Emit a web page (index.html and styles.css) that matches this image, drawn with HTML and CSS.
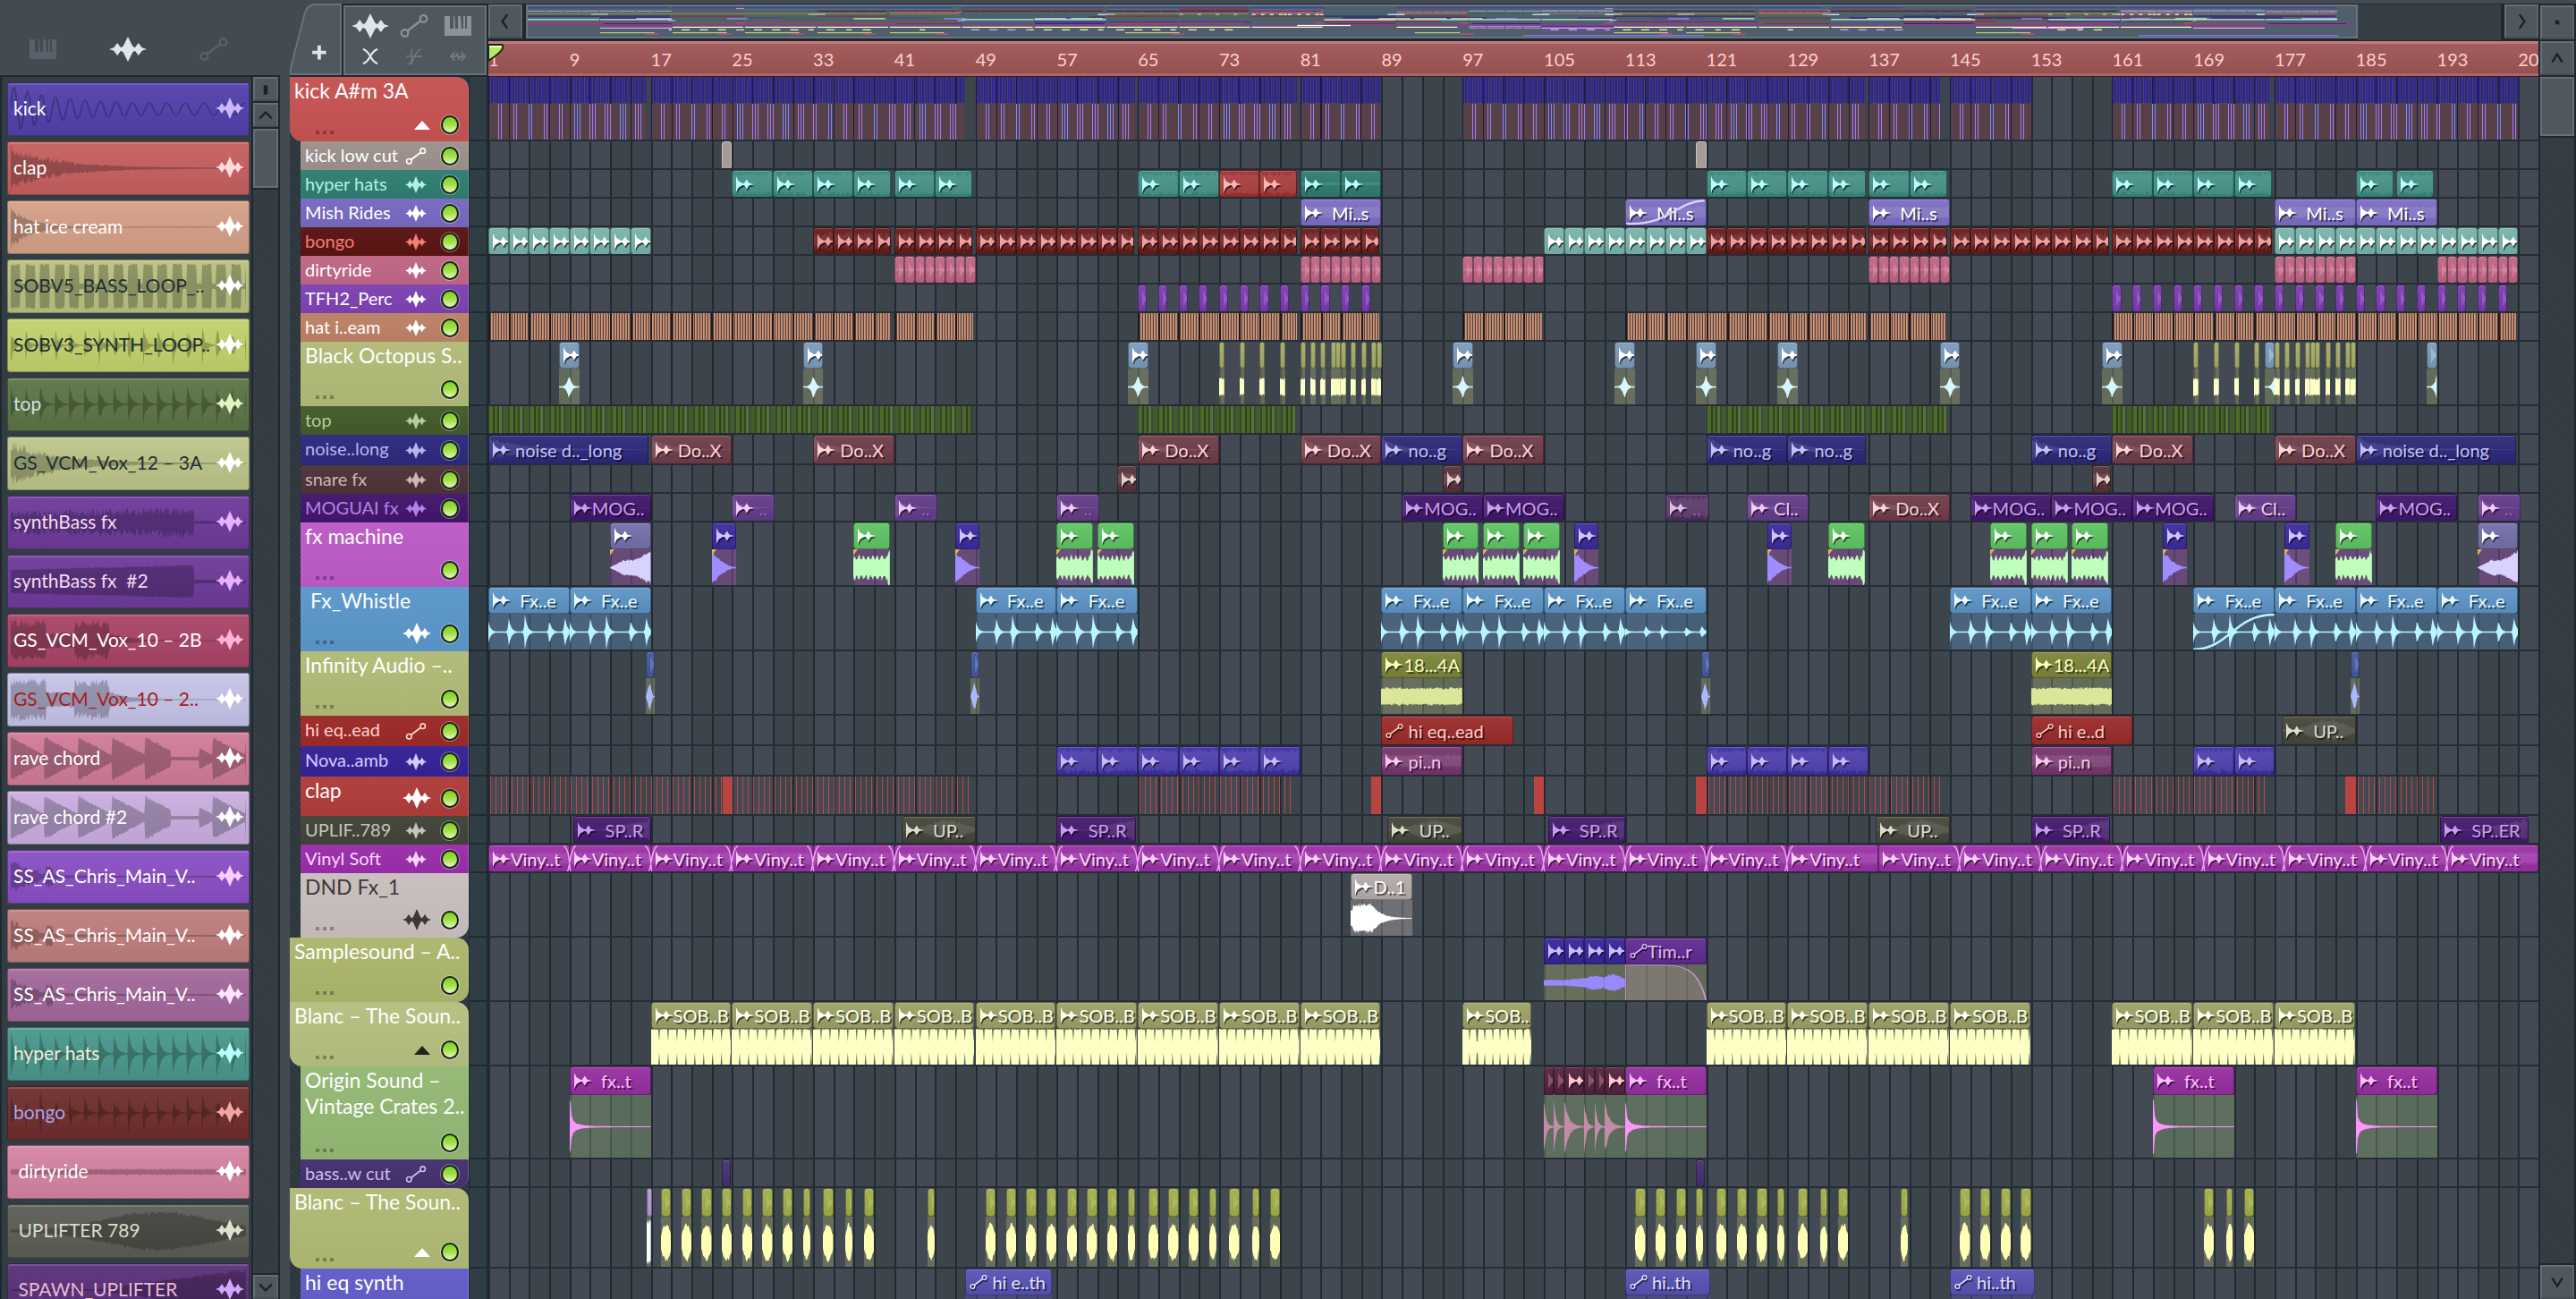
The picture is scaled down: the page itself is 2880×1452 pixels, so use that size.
FILE: index.html
```html
<!DOCTYPE html>
<html lang="en">

<head>
    <meta charset="UTF-8">
    <meta name="viewport" content="width=device-width, initial-scale=1.0">
    <title>Playlist</title>
    <link rel="stylesheet" href="styles.css">
</head>

<body>
    <!-- shared icons -->
    <svg class="defs" aria-hidden="true">
        <symbol id="i-wave" viewBox="0 0 32 24" preserveAspectRatio="none">
            <path d="M0 12 L4 10.5 L7 6 L10 10.5 L12 9 L16 0 L20 9 L22 10.5 L25 6 L28 10.5 L32 12 L28 13.5 L25 18 L22 13.5 L20 15 L16 24 L12 15 L10 13.5 L7 18 L4 13.5 Z" fill="currentColor" />
        </symbol>
        <symbol id="i-clip" viewBox="0 0 22 20">
            <path d="M0 0 L3 6 L8 9 L10 8.5 L13 4 L16 8.5 L22 10 L16 11.5 L13 16 L10 11.5 L8 11 L3 14 L0 20 Z" fill="currentColor" />
        </symbol>
        <symbol id="i-auto" viewBox="0 0 32 26">
            <path d="M8.500 18.500 L23 7.500" stroke="currentColor" stroke-width="2.500" fill="none" />
            <circle cx="5.500" cy="21" r="3.800" stroke="currentColor" stroke-width="2.200" fill="none" />
            <circle cx="26.500" cy="5" r="3.800" stroke="currentColor" stroke-width="2.200" fill="none" />
        </symbol>
        <symbol id="i-keys" viewBox="0 0 30 22">
            <path d="M0 0 H6 V14 H10 V0 H11 L12 14 H15 V0 H18 L19 14 H21 V0 H23 V14 H25 V0 H30 V22 H0 Z" fill="currentColor" />
        </symbol>
    </svg>

    <div class="app">
        <aside class="picker">
            <div class="picker-tabs">
                <button aria-label="Patterns"><svg class="ic-keys"><use href="#i-keys" /></svg></button>
                <button class="on" aria-label="Audio clips"><svg class="ic-wave"><use href="#i-wave" /></svg></button>
                <button aria-label="Automation"><svg class="ic-auto"><use href="#i-auto" /></svg></button>
            </div>
            <div class="picker-body">
                <ul class="picker-list" id="picker"></ul>
                <div class="scroll">
                    <button class="sb" aria-label="Picker options"><svg viewBox="0 0 14 14"><path d="M7 3 V12" stroke-width="4" /></svg></button>
                    <button class="sb" aria-label="Scroll up"><svg viewBox="0 0 14 14"><path d="M1 10 L7 4 L13 10" /></svg></button>
                    <div class="thumb"></div>
                    <div class="rail"></div>
                    <button class="sb" aria-label="Scroll down"><svg viewBox="0 0 14 14"><path d="M1 4 L7 10 L13 4" /></svg></button>
                </div>
            </div>
        </aside>

        <main class="playlist">
            <div class="top">
                <div class="tools">
                    <button class="add" aria-label="Add track">
                        <svg viewBox="0 0 60 82" preserveAspectRatio="none"><path d="M1 81 V74 L17 12 Q20 1 29 1 H59 V81 Z" fill="#50585f" stroke="#68727a" stroke-width="2" /><path d="M26 56 H42 M34 48 V64" stroke="#dfe5e8" stroke-width="4" /></svg>
                    </button>
                    <div class="toolbox">
                        <button class="on" aria-label="Audio"><svg class="ic-wave"><use href="#i-wave" /></svg></button>
                        <button aria-label="Automation"><svg class="ic-auto"><use href="#i-auto" /></svg></button>
                        <button aria-label="Patterns"><svg class="ic-keys"><use href="#i-keys" /></svg></button>
                        <button class="on" aria-label="Crossfade"><svg class="ic-small" viewBox="0 0 20 20"><path d="M1 1 C11 4 9 16 19 19 M19 1 C9 4 11 16 1 19" fill="none" stroke="currentColor" stroke-width="2.500" /></svg></button>
                        <button class="off" aria-label="Curve"><svg class="ic-small" viewBox="0 0 20 20"><path d="M0 10 H20 M7 0 V20 M2 20 C12 18 8 4 19 1" fill="none" stroke="currentColor" stroke-width="1.500" /></svg></button>
                        <button class="off" aria-label="Stretch"><svg class="ic-small" viewBox="0 0 20 20"><path d="M6 5 L1 10 L6 15 M14 5 L19 10 L14 15 M2 10 H7 L9 7 L11 13 L13 10 H18" fill="none" stroke="currentColor" stroke-width="2" /></svg></button>
                    </div>
                </div>
                <div class="nav">
                    <div class="mini">
                        <button class="sb" aria-label="Scroll left"><svg viewBox="0 0 14 14"><path d="M9 0 L4 7 L9 14" /></svg></button>
                        <div class="mini-map" id="minimap"></div>
                        <div class="mini-rest"></div>
                        <button class="sb" aria-label="Scroll right"><svg viewBox="0 0 14 14"><path d="M5 0 L10 7 L5 14" /></svg></button>
                    </div>
                    <div class="ruler" id="ruler">
                        <svg class="playhead" viewBox="0 0 18 20"><path d="M0 1 H15 Q17 1 16 5 Q14 10 0 19 Z" fill="#b4e86a" stroke="#1c2710" stroke-width="2" /><path d="M1 3 H14" stroke="#f0ffc8" stroke-width="2" /></svg>
                    </div>
                </div>
                <div class="corner">
                    <button class="sb" aria-label="Zoom"><svg viewBox="0 0 14 14"><path d="M7 5 V9" stroke-width="4" /></svg></button>
                    <button class="sb" aria-label="Scroll up"><svg viewBox="0 0 14 14"><path d="M2 11 L7 3 L12 11" /></svg></button>
                </div>
            </div>
            <div class="body">
                <div class="rows" id="rows"></div>
                <div class="scroll wide">
                    <div class="thumb"></div>
                    <div class="rail"></div>
                    <button class="sb" aria-label="Scroll down"><svg viewBox="0 0 14 14"><path d="M2 3 L7 11 L12 3" /></svg></button>
                </div>
            </div>
        </main>
    </div>
    <script src="playlist.js"></script>
</body>

</html>
```

FILE: styles.css
```css
* {
    box-sizing: border-box;
}

body {
    margin: 0;
    background: #434b52;
    font-family: "Liberation Sans Narrow", "Lato", "Noto Sans", sans-serif;
    font-size: 21px;
    line-height: 28px;
    color: #fff;
    overflow: hidden;
}

button {
    margin: 0;
    padding: 0;
    border: 0;
    background: none;
    color: inherit;
    font: inherit;
}

svg {
    display: block;
}

.defs {
    width: 0;
    height: 0;
    position: absolute;
}

.app {
    display: flex;
    height: 100vh;
}

.ic-wave {
    width: 42px;
    height: 28px;
}

.ic-auto {
    width: 34px;
    height: 26px;
}

.ic-keys {
    width: 30px;
    height: 22px;
}

.ic-small {
    width: 20px;
    height: 18px;
}

/* picker */

.picker {
    width: 313px;
    flex: none;
    display: flex;
    flex-direction: column;
}

.picker-tabs {
    height: 84px;
    flex: none;
    display: flex;
    justify-content: space-between;
    align-items: center;
    padding: 26px 57px 0 33px;
    color: #59626a;
}

.picker-tabs .on,
.toolbox .on {
    color: #dfe5e8;
}

.picker-body {
    flex: 1;
    min-height: 0;
    display: flex;
    border: 2px solid #1f282e;
    border-bottom: 0;
}

.picker-list {
    flex: 1;
    min-width: 0;
    margin: 0;
    padding: 6px 2px 0 6px;
    list-style: none;
    background: #323c43;
    overflow: hidden;
    display: flex;
    flex-direction: column;
    gap: 6px;
}

.item {
    flex: none;
    height: 60px;
    display: grid;
    grid-template-columns: 1fr 32px;
    align-items: center;
    padding: 0 5px 2px 6px;
    border-radius: 3px;
    border: 1px solid rgba(0, 0, 0, .3);
    box-shadow: inset 0 2px 0 rgba(255, 255, 255, .14);
    background-image: linear-gradient(rgba(255, 255, 255, .05), rgba(0, 0, 0, .06));
    position: relative;
    white-space: pre;
    overflow: hidden;
}

.item > .back {
    position: absolute;
    left: 3px;
    top: 2px;
    width: calc(100% - 6px);
    height: 54px;
    color: rgba(0, 0, 0, .24);
}

.item span,
.item .ic {
    position: relative;
}

.item .ic {
    width: 32px;
    height: 24px;
}

/* scrollbars */

.sb {
    background: #50585f;
    border: 2px solid #656f77;
    border-color: #656f77 #5b646c #454e55 #656f77;
    flex: none;
    display: flex;
    align-items: center;
    justify-content: center;
}

.sb svg {
    width: 16px;
    height: 16px;
    fill: none;
    stroke: #1b2126;
    stroke-width: 2;
}

.scroll {
    width: 30px;
    flex: none;
    display: flex;
    flex-direction: column;
    gap: 2px;
    border-left: 2px solid #1f282e;
    background: #1f282e;
}

.scroll .sb {
    height: 27px;
}

.thumb {
    height: 66px;
    flex: none;
    background: #50585f;
    border: 2px solid #656f77;
}

.rail {
    flex: 1;
    background: repeating-linear-gradient(45deg, #323b42 0 2px, #373f45 2px 4px);
}

.scroll.wide {
    width: 42px;
    border-right: 2px solid #1f282e;
}

.scroll.wide .sb {
    height: 38px;
}

/* playlist */

.playlist {
    flex: 1;
    min-width: 0;
    display: flex;
    flex-direction: column;
    margin-left: 11px;
}

.top {
    height: 86px;
    flex: none;
    display: flex;
    background: linear-gradient(#434b52 4px, #1f282e 4px);
}

.tools {
    width: 222px;
    flex: none;
    display: flex;
    gap: 2px;
    padding: 4px 2px 2px 0;
}

.add {
    width: 58px;
    background: #434b52;
}

.add svg {
    width: 58px;
    height: 80px;
}

.toolbox {
    flex: 1;
    margin-top: 2px;
    padding: 3px 6px 4px 4px;
    display: grid;
    grid-template-columns: 1fr 1fr 1fr;
    grid-template-rows: 36px 1fr;
    place-items: center;
    background: #50585f;
    border: 2px solid #68727a;
    color: #8b949a;
}

.toolbox .off {
    color: #727b82;
}

.nav {
    flex: 1;
    min-width: 0;
}

.mini {
    height: 40px;
    margin-top: 5px;
    display: flex;
    gap: 4px;
}

.mini .sb {
    width: 38px;
    height: 38px;
}

.mini-map {
    flex: 2047;
    height: 38px;
    background: #50606a;
    border: 2px solid #68757c;
}

.mini-map svg {
    width: 100%;
    height: 34px;
}

.mini-rest {
    flex: 160;
    background: #363f46;
    margin-left: -4px;
}

.ruler {
    height: 39px;
    margin-top: 1px;
    position: relative;
    background: linear-gradient(#a45d5f, #95504f);
    border-top: 3px solid #c27b7d;
    border-bottom: 3px solid #ad6466;
    color: #ffcfcf;
    font-size: 20px;
    overflow: hidden;
}

.ruler span {
    position: absolute;
    top: 3px;
}

.playhead {
    position: absolute;
    left: 0;
    top: 0;
    width: 18px;
    height: 20px;
    z-index: 2;
}

.corner {
    width: 42px;
    padding: 6px 2px 0;
    display: flex;
    flex-direction: column;
    gap: 2px;
}

.corner .sb {
    height: 38px;
}

.body {
    flex: 1;
    min-height: 0;
    display: flex;
}

.rows {
    flex: 1;
    min-width: 0;
    overflow: hidden;
}

.row {
    display: flex;
}

.head {
    width: 200px;
    flex: none;
    padding-left: 12px;
    background: repeating-linear-gradient(45deg, #2b353c 0 2px, #343d44 2px 4px);
}

.head.parent {
    padding-left: 0;
}

.track {
    height: 100%;
    position: relative;
    display: flex;
    justify-content: space-between;
    padding: 1px 10px 0 5px;
    overflow: hidden;
    white-space: pre;
    background-image: linear-gradient(rgba(255, 255, 255, .03), rgba(0, 0, 0, .03));
    border-right: 1px solid rgba(255, 255, 255, .2);
}

.track .name {
    flex: 1;
    min-width: 0;
    font-size: 20px;
}

.track.tall .name {
    font-size: 23px;
    line-height: 29px;
    margin-right: -10px;
}

.track.tr {
    border-top-right-radius: 14px;
}

.track.br {
    border-bottom-right-radius: 14px;
}

.track.bl {
    border-bottom-left-radius: 14px;
}

.side {
    display: flex;
    align-items: center;
    gap: 16px;
    align-self: center;
}

.tall .side {
    position: absolute;
    right: 10px;
    bottom: 8px;
}

.side .ic {
    width: 24px;
    height: 19px;
}

.tall .side .ic {
    width: 32px;
    height: 24px;
    margin-right: -5px;
}

.side .tri {
    width: 18px;
    height: 10px;
    margin-right: -4px;
}

.led {
    width: 20px;
    height: 21px;
    border-radius: 50%;
    border: 2px solid #13241a;
    background: linear-gradient(#7fcf22, #a5df4a 50%, #e6f9c0);
    box-shadow: 0 0 0 1px rgba(255, 255, 255, .35);
}

.dots {
    position: absolute;
    right: 150px;
    bottom: 8px;
    width: 20px;
    height: 4px;
    background: repeating-linear-gradient(90deg, rgba(0, 0, 0, .3) 0 4px, transparent 4px 8px);
}

.strip {
    width: 22px;
    flex: none;
    background: #313d44;
    border: solid #1e2a31;
    border-width: 0 2px 2px 1px;
}

.lane {
    flex: 1;
    min-width: 0;
    position: relative;
    overflow: hidden;
    border-bottom: 2px solid #252d36;
    background:
        repeating-linear-gradient(90deg, #212932 0 2px, transparent 2px calc(100% / 101)),
        repeating-linear-gradient(90deg, #434a54 0 calc(100% * 4 / 202), #3c444c calc(100% * 4 / 202) calc(100% * 8 / 202));
}

/* clips sit on the timeline at their own bar */

.clip {
    position: absolute;
    top: 0;
    bottom: -1px;
    display: flex;
    flex-direction: column;
}

.title {
    flex: 1;
    min-height: 0;
    position: relative;
    display: flex;
    align-items: center;
    padding-left: 4px;
    overflow: hidden;
    white-space: pre;
    font-size: 20px;
    border-radius: 4px;
    border: 1px solid rgba(0, 0, 0, .35);
    box-shadow: inset 0 1px 0 rgba(255, 255, 255, .2);
    background-image: linear-gradient(rgba(255, 255, 255, .06), rgba(0, 0, 0, .06));
}

.bodied .title {
    flex: 0 0 30px;
}

.high .title {
    flex: 0 0 32px;
}

.title .ic {
    width: 20px;
    height: 20px;
    flex: none;
    position: relative;
    filter: drop-shadow(1px 2px 0 rgba(0, 0, 0, .6));
}

.title .ghost {
    opacity: .3;
    filter: none;
}

.title .lbl {
    position: relative;
    text-shadow: 2px 2px 0 rgba(0, 0, 0, .55);
}

.title .dim {
    opacity: .3;
}

.title .back {
    position: absolute;
    inset: 0;
    width: 100%;
    height: 100%;
    opacity: .1;
}

.wavebox {
    flex: 1;
    min-height: 0;
    position: relative;
    background: color-mix(in srgb, var(--row) 34%, transparent);
}

.wavebox svg,
.fade {
    position: absolute;
    inset: 0;
    width: 100%;
    height: 100%;
}

.xfade {
    position: absolute;
    left: -7px;
    top: 1px;
    width: 14px;
    height: 30px;
    z-index: 1;
}

/* dense runs of short hits, with the bar lines showing through */

.kicks {
    background:
        repeating-linear-gradient(90deg, #1c1a3c 0 1px, transparent 1px calc(100% * 2 / var(--len))),
        repeating-linear-gradient(90deg, #35259d 0 2px, rgba(53, 37, 157, .25) 2px 3px, #2f2387 3px 5px, transparent 5px 6px) 0 0 / 100% 29px no-repeat,
        repeating-linear-gradient(90deg, #70383e 0 1px, #4a454d 1px 3px) 0 30px / 100% 100% no-repeat;
}

.kicks svg {
    width: 100%;
    height: 41px;
    margin-top: 30px;
}

.hats {
    background:
        repeating-linear-gradient(90deg, #1d1a1e 0 2px, transparent 2px calc(100% * 2 / var(--len))),
        repeating-linear-gradient(90deg, #d2977a 0 1px, #bd8165 1px 2px, #4c413f 2px 3px);
}

.tops {
    background: repeating-linear-gradient(90deg, #33461f 0 1px, #4c6a2c 1px 5px, #2e401d 5px 7px, #48652b 7px 10px, #32451f 10px 12px, #557434 12px 15px, #3b444a 15px 17px, #405d26 17px 22px, #3b444a 22px 23px);
}

.claps {
    background: repeating-linear-gradient(90deg, transparent 0 2px, #c04644 2px 3px, transparent 3px 6px);
}

.solid {
    background: #ba4442;
}

.flat {
    background: #a79a97;
    border-radius: 3px;
    border: 1px solid #ccbfba;
    color: #7d716e;
}
```

FILE: playlist.js
```js
const BARS = 202;

// small repeatable random, so waveforms stay the same on every load
let seed = 7;
function rnd() {
    seed = (seed * 16807) % 2147483647;
    return seed / 2147483647;
}

const ENV = {
    decay: t => Math.exp(-5 * t),
    fast: t => Math.exp(-12 * t),
    pluck: t => t < .02 ? .9 : .22 * Math.exp(-10 * t) + .65 * Math.exp(-50 * t),
    flat: () => .9,
    mid: () => .5,
    tall: t => .3 + .5 * Math.sin(Math.PI * t),
    low: () => .12,
    belly: t => .05 + .8 * Math.pow(Math.sin(Math.PI * Math.min(1, t * .8)), 3),
    grow: t => Math.max(.02, (t - .35) * 1.4),
    hits: t => Math.exp(-5 * ((t * 16) % 1)),
    saw: t => .95 - .65 * ((t * 11) % 1),
    loop: t => (t * 16) % 1 < .65 ? .95 : .1,
    sob: t => (t * 9) % 1 < .86 ? 1 : .3,
    crash: t => t < .04 ? .5 : t < .35 ? .85 : .85 * Math.exp(-7 * (t - .35)),
    synth: t => t < .78 ? .5 + .25 * t : .06,
    vox: t => (t < .15 ? .9 : t < .27 ? .35 : t < .42 ? .85 : .5 * Math.exp(-14 * (t - .4))),
    blip: t => (t < .12 ? .7 : .3) * Math.exp(-8 * t) + (t > .15 && t < .18 ? .4 : 0) + .02,
    chord: t => { let f = (t * 7) % 1; return t > .68 && t < .8 ? .06 : .95 - .8 * f; },
    spark: t => Math.pow(1 - Math.abs(t - .5) * 2, 4) * .7 + .02,
    star: t => Math.pow(t, 4) * .7 + .02,
    rev: t => t < .35 ? t * 1.3 : t < .6 ? .45 : .45 + (t - .6) * 1.3,
    arrow: t => Math.max(.02, .98 * Math.pow(1 - t, 1.8)),
    green: t => t > .93 ? 1 : .6 + .15 * Math.sin(t * 50),
    spindle: t => t < .5 ? t * 1.9 : Math.max(.02, (.8 - t) * 2.5),
    s0: () => .16,
    s1: t => .16 + .1 * t,
    s2: t => .26 + .14 * Math.sin(t * 3),
    s3: t => .35 + .15 * Math.sin(t * 4),
    whistle: t => {
        let e = .02;
        [[0, .6], [.25, .85], [.45, 1], [.75, .7], [.94, .95]].forEach(h => {
            let d = t - h[0];
            if (d >= 0) e = Math.max(e, h[1] * Math.exp(-35 * d));
            else e = Math.max(e, h[1] * Math.exp(120 * d));
        });
        return e;
    },
    quiet: t => ENV.whistle(t) * .45 + .01
};

function wave(kind, color, n, jag) {
    let top = [], bottom = [];
    for (let i = 0; i <= n; i++) {
        let e = ENV[kind](i / n);
        let a = e * 49 * (1 - jag * rnd()), b = e * 49 * (1 - jag * rnd());
        top.push(i + " " + (50 - a - .8).toFixed(1));
        bottom.unshift(i + " " + (50 + b + .8).toFixed(1));
    }
    return `<svg class="back" viewBox="0 0 ${n} 100" preserveAspectRatio="none"><path fill="${color}" d="M${top.join("L")}L${bottom.join("L")}Z"/></svg>`;
}

function icon(name, color, cls) {
    return `<svg class="ic ${cls || ""}" style="color:${color}"><use href="#i-${name}"/></svg>`;
}

/* ---- picker ---- */
// name, colour, text, icon, envelope, jag
const ITEMS = [
    ["kick", "#5241ab", "#fff", "#cdb8ff", "line", 0],
    ["clap", "#c65f5f", "#fff", "#ffdcdc", "decay", .5],
    ["hat ice cream", "#d5a088", "#fff", "#fff", "fast", .4],
    ["SOBV5_BASS_LOOP_..", "#b9c180", "#1f2f33", "#fff", "loop", .1],
    ["SOBV3_SYNTH_LOOP..", "#c3d16c", "#1f2f33", "#fff", "hits", .7],
    ["top", "#5b7446", "#cfe3e0", "#e0f3c2", "hits", .5],
    ["GS_VCM_Vox_12 – 3A", "#bcc588", "#1f2f33", "#fff", "decay", .5],
    ["synthBass fx", "#6d3a9a", "#f3dcf3", "#e8b0ff", "synth", .6],
    ["synthBass fx  #2", "#6d3a9a", "#f3dcf3", "#e8b0ff", "synth", .1],
    ["GS_VCM_Vox_10 – 2B", "#a94468", "#fff", "#ffb4dc", "vox", .4],
    ["GS_VCM_Vox_10 – 2..", "#c5c4e8", "#a81c20", "#fff", "vox", .4],
    ["rave chord", "#d07b9a", "#fff", "#fff", "chord", .15],
    ["rave chord #2", "#c9aedf", "#fff", "#fff", "chord", .15],
    ["SS_AS_Chris_Main_V..", "#8a4fc4", "#fff", "#ffccff", "blip", .4],
    ["SS_AS_Chris_Main_V..", "#be7d7d", "#fff", "#fff", "blip", .4],
    ["SS_AS_Chris_Main_V..", "#a3689b", "#fff", "#ffe6ff", "blip", .4],
    ["hyper hats", "#4a978c", "#f3eedb", "#b8ffff", "hits", .1],
    ["bongo", "#702d2e", "#aaa6ea", "#f2a3a3", "hits", .8],
    [" dirtyride", "#d583a2", "#fff", "#fff", "low", .4],
    [" UPLIFTER 789", "#5b5e55", "#dcdccb", "#e0e0d0", "belly", .2],
    [" SPAWN_UPLIFTER", "#5a3078", "#e8b8d8", "#d0a8ff", "grow", .2]
];

let picker = document.getElementById("picker");
ITEMS.forEach(it => {
    let back;
    if (it[4] == "line") {
        let d = "M0 50";
        for (let x = 0; x < 264; x++) {
            d += `L${x} ${(50 - Math.sin(x * x * -.0003 + x * .42) * (12 + 36 * Math.exp(-x / 50))).toFixed(1)}`;
        }
        back = `<svg class="back" viewBox="0 0 264 100" preserveAspectRatio="none"><path d="${d}" fill="none" stroke="currentColor" stroke-width="2"/></svg>`;
    } else {
        back = wave(it[4], "currentColor", 264, it[5]);
    }
    picker.innerHTML += `<li class="item" style="background-color:${it[1]};color:${it[2]}">${back}<span>${it[0]}</span>${icon("wave", it[3])}</li>`;
});

/* ---- clip kinds ---- */
const K = {
    flat: { cls: "flat", c: "#a79a97" },
    kick: { cls: "kicks", c: "#4a3ab8" },
    hat: { cls: "hats", c: "#a07a70" },
    top: { cls: "tops", c: "#55703a" },
    clap: { cls: "claps", c: "#a04a50" },
    solid: { cls: "solid", c: "#d05050" },
    hyper: { c: "#34877b", f: "#b8ffff", w: "flat" },
    hyper2: { c: "#2f7a6e", f: "#b8ffff", w: "low" },
    red: { c: "#a02c2c", f: "#ffb4b4", w: "flat" },
    mish: { c: "#7b6cc4", f: "#fff", l: "  Mi..s", w: "mid" },
    bongoL: { c: "#78b2aa", f: "#fff" },
    bongo: { c: "#661a1a", f: "#f0a09c", w: "saw" },
    dirty: { c: "#bf6485", f: "#f0b4c8", ghost: 1, w: "low" },
    tfh: { c: "#7a3cb0", f: "#c89af0", ghost: 1 },
    oct: { c: "#7b9bbb", f: "#fff", w: "spark", wc: "#d6f7ff" },
    octS: { c: "#7b9bbb", f: "#fff", w: "star", wc: "#d6f7ff", ghost: 1 },
    oliv: { c: "#a4ab68", f: "#fff", w: "mid", wc: "#fdffc4", thin: 1 },
    noise: { c: "#2b2878", f: "#c4c0ff", l: " noise d.._long", w: "decay" },
    no: { c: "#2b2878", f: "#c4c0ff", l: " no..g", w: "decay" },
    dox: { c: "#6e3b48", f: "#ffd2d6", l: " Do..X", w: "decay" },
    snare: { c: "#553339", f: "#e8cccc", w: "mid" },
    mog: { c: "#40156a", f: "#cf9cf5", l: "MOG..", w: "fast" },
    cl: { c: "#633c88", f: "#f6c8ff", l: " Cl..", w: "decay" },
    dd: { c: "#633c88", f: "#f6c8ff", l: " ..", dim: 1, w: "decay" },
    dd2: { c: "#4b2b5e", f: "#e4b8e4", l: " ..", dim: 1, w: "flat" },
    lav: { c: "#7470aa", f: "#fff", w: "rev", wc: "#d8d2ff", mark: 1 },
    ind: { c: "#3c2a9c", f: "#d0c4ff", w: "arrow", wc: "#a08cff", mark: 1 },
    grn: { c: "#5fc363", f: "#f0fff0", w: "green", wc: "#bfffbc", mark: 1 },
    whis: { c: "#5b94c6", f: "#e8fbff", l: "  Fx..e", w: "whistle", wc: "#b8f6ff" },
    whisQ: { c: "#5b94c6", f: "#e8fbff", l: "  Fx..e", w: "quiet", wc: "#b8f6ff" },
    thinB: { c: "#44589a", f: "#9ab0f0", ghost: 1, w: "spindle", wc: "#a8b8ff" },
    inf: { c: "#7b8539", f: "#faffc0", l: "18...4A", w: "mid", wc: "#dce698" },
    hiL: { c: "#9a2b2b", f: "#ffc9c4", l: " hi eq..ead", i: "auto" },
    hiS: { c: "#9a2b2b", f: "#ffc9c4", l: " hi e..d", i: "auto" },
    up: { c: "#45463a", f: "#dcdccb", l: "  UP..", w: "belly" },
    nova: { c: "#3d2da4", f: "#c8b8ff", w: "flat" },
    pin: { c: "#75356c", f: "#ffc4f0", l: " pi..n", w: "mid" },
    sp: { c: "#43196c", f: "#c89cf5", l: "  SP..R", w: "grow" },
    sper: { c: "#43196c", f: "#c89cf5", l: "  SP..ER", w: "grow" },
    viny: { c: "#9c30a8", f: "#ffd0ff", l: "Viny..t", w: "mid", x: 1 },
    dnd: { c: "#b4aaa9", f: "#fff", l: "D..1", w: "crash", wc: "#fff" },
    samp0: { c: "#35259a", f: "#c8bcff", w: "s0", wc: "#9a88ff" },
    samp1: { c: "#35259a", f: "#c8bcff", w: "s1", wc: "#9a88ff" },
    samp2: { c: "#35259a", f: "#c8bcff", w: "s2", wc: "#9a88ff" },
    samp3: { c: "#35259a", f: "#c8bcff", w: "s3", wc: "#9a88ff" },
    tim: { c: "#5f2a92", f: "#e0b8f0", l: "Tim..r", i: "auto", curve: "M0 100V2H50C80 2 92 30 100 100" },
    sob: { c: "#9ba165", f: "#feffec", l: "SOB..B", w: "sob", wc: "#feffc4" },
    sob2: { c: "#9ba165", f: "#feffec", l: "SOB..", w: "sob", wc: "#feffc4" },
    fxt: { c: "#962f9f", f: "#ffbcff", l: "  fx..t", w: "pluck", wc: "#ff94ff" },
    mar: { c: "#52233d", f: "#ffc4d0", ghost1: 1, w: "decay", wc: "#c48ba8" },
    bass: { c: "#43306e", f: "#7a5cae", thin: 1 },
    lil: { c: "#b49ad0", f: "#fff", thin: 1, w: "flat", wc: "#fff" },
    blan: { c: "#a0ad4c", f: "#d0dc80", ghost: 1, w: "tall", wc: "#feffb4" },
    hiT: { c: "#5652b4", f: "#e4e0ff", l: " hi e..th", i: "auto" },
    hiU: { c: "#5652b4", f: "#e4e0ff", l: " hi..th", i: "auto" }
};

// n clips of the same kind laid end to end
function run(kind, from, to, step, len) {
    let out = [];
    for (let b = from; b < to - .01; b += step) out.push([kind, b, len || Math.min(step, to - b)]);
    return out;
}
function at(kind, len, list) {
    return list.map(b => [kind, b, len]);
}

/* ---- tracks ---- */
// name, height, colour, text, icon, classes, clips
const TRACKS = [
    ["kick A#m 3A", 72, "#c65352", "#fff", "tri", "parent tr bl", [["kick", 0, 15.6], ["kick", 16, 31], ["kick", 48, 15.7], ["kick", 64, 15.7], ["kick", 80, 8], ["kick", 96, 39.7], ["kick", 136, 7], ["kick", 144, 8], ["kick", 160, 15.6], ["kick", 176, 24]]],
    ["kick low cut", 32, "#9d918c", "#fff", "auto", "", at("flat", 1, [23, 119])],
    ["hyper hats", 32, "#2f7d71", "#b4efe4", "wave", "", [...run("hyper", 24, 39.7, 4), ...run("hyper", 40, 47.7, 4), ...run("hyper", 64, 72, 4), ...run("red", 72, 79.7, 4), ...run("hyper2", 80, 88, 4), ...run("hyper", 120, 135.7, 4), ...run("hyper", 136, 143.7, 4), ...run("hyper", 160, 175.7, 4), ...at("hyper", 3.7, [184, 188])]],
    ["Mish Rides", 32, "#7768bf", "#fff", "wave", "", [["mish", 80, 8], ["mish", 112, 8, "fade"], ["mish", 136, 8], ["mish", 176, 8], ["mish", 184, 8]]],
    ["bongo", 32, "#5a1413", "#f07f77", "wave", "", [...run("bongoL", 0, 16, 2), ...run("bongo", 32, 39.7, 2), ...run("bongo", 40, 47.7, 2), ...run("bongo", 48, 63.6, 2), ...run("bongo", 64, 79.7, 2), ...run("bongo", 80, 87.8, 2), ...run("bongoL", 104, 120, 2), ...run("bongo", 120, 135.7, 2), ...run("bongo", 136, 143.7, 2), ...run("bongo", 144, 159.7, 2), ...run("bongo", 160, 175.7, 2), ...run("bongoL", 176, 200, 2)]],
    ["dirtyride", 32, "#bf6585", "#fff", "wave", "", [40, 80, 96, 136, 176, 192].flatMap(b => run("dirty", b, b + 8, 1))],
    ["TFH2_Perc", 32, "#7d42b2", "#fff", "wave", "", [...run("tfh", 64, 88, 2, .9), ...run("tfh", 160, 200, 2, .9)]],
    ["hat i..eam", 32, "#bd8165", "#fff", "wave", "", [["hat", 0, 39.7], ["hat", 40, 7.8], ["hat", 64, 15.7], ["hat", 80, 7.8], ["hat", 96, 7.8], ["hat", 112, 23.7], ["hat", 136, 7.7], ["hat", 160, 23.9], ["hat", 184, 15.8]]],
    ["Black Octopus S..", 72, "#b1ba76", "#fff", "", "", [...at("oct", 2, [7, 31, 63, 95, 111, 119, 127, 143, 159]), ["octS", 175, 1], ["octS", 191, 1], ...at("oliv", .5, [72, 74, 76, 78, 80, 81, 82, 83, 83.5, 84, 85, 86, 87, 87.5, 168, 170, 172, 174, 176, 177, 178, 179, 179.5, 180, 181, 182, 183, 183.5])]],
    ["top", 32, "#425a28", "#b4cd9c", "wave", "", [["top", 0, 47.7], ["top", 64, 15.7], ["top", 120, 23.7], ["top", 160, 15.7]]],
    ["noise..long", 34, "#2c297e", "#b8b4f0", "wave", "", [["noise", 0, 15.8], ...at("dox", 8, [16, 32, 64, 80, 96, 160, 176]), ["no", 88, 8], ["no", 120, 8], ["no", 128, 7.7], ["no", 152, 8], ["noise", 184, 15.8]]],
    ["snare fx", 32, "#4b3338", "#ceb6b8", "wave", "", at("snare", 1.9, [62, 94, 158])],
    ["MOGUAI fx", 32, "#41176a", "#b680e6", "wave", "", [...at("mog", 8, [8, 90, 98, 146, 154, 162, 186]), ...at("dd", 4.2, [24, 40, 56, 196]), ["dd2", 116, 4.3], ["cl", 124, 6.1], ["cl", 172, 6.1], ["dox", 136, 8]]],
    ["fx machine", 72, "#bc5ac8", "#fff", "", "", [...at("lav", 4, [12, 196]), ...at("ind", 2.4, [22, 46, 107, 126, 165, 177]), ...at("grn", 3.6, [36, 56, 60, 94, 98, 102, 132, 148, 152, 156, 182])]],
    [" Fx_Whistle", 72, "#5b96c9", "#fff", "wave", "", [...at("whis", 8, [0, 8, 48, 56, 88, 96, 104, 144, 152]), ["whisQ", 112, 8], ["whis", 168, 8, "bfade"], ...at("whis", 8, [176, 184, 192])]],
    ["Infinity Audio –..", 72, "#b1ba76", "#fff", "", "", [...at("thinB", .9, [15.5, 47.5, 119.5, 183.5]), ...at("inf", 8, [88, 152])]],
    ["hi eq..ead", 34, "#9b2927", "#ffd0cc", "auto", "", [["hiL", 88, 13], ["hiS", 152, 10], ["up", 176.7, 7.3]]],
    ["Nova..amb", 34, "#362296", "#d0ccff", "wave", "", [...run("nova", 56, 80, 4), ...run("nova", 120, 136, 4), ...run("nova", 168, 176, 4), ["pin", 88, 8], ["pin", 152, 8]]],
    ["clap", 44, "#ae3c3a", "#fff", "wave", "", [["clap", 0, 47.3], ["clap", 64, 15.4], ["clap", 120, 23.5], ["clap", 160, 15.4], ["clap", 184, 7.8], ...at("solid", 1, [23.1, 87, 103, 119, 183])]],
    ["UPLIF..789", 32, "#414338", "#c3c6ba", "wave", "", [["sp", 8.4, 7.6], ["up", 40.7, 7.3], ["sp", 56, 7.8], ["up", 88.6, 7.4], ["sp", 104.4, 7.6], ["up", 136.7, 7.3], ["sp", 152, 7.8], ["sper", 192.3, 8.7]]],
    ["Vinyl Soft", 32, "#9b2da8", "#fbd8ff", "wave", "", [...run("viny", 0, 128, 8), ["viny", 128, 9], ...run("viny", 137, 193, 8), ["viny", 193, 9]]],
    ["DND Fx_1", 72, "#c8bebd", "#40363a", "wave", "br", [["dnd", 85, 6]]],
    ["Samplesound – A..", 72, "#acb66c", "#fff", "", "parent tr br", [["samp0", 104, 2], ["samp1", 106, 2], ["samp2", 108, 2], ["samp3", 110, 2], ["tim", 112, 8]]],
    ["Blanc – The Soun..", 72, "#b6bf80", "#fff", "tri", "parent tr bl dark", [...at("sob", 7.9, [16, 24, 32, 40, 48, 56, 64, 72, 80, 120, 128, 136, 144, 160, 168, 176]), ["sob2", 96, 6.8]]],
    ["Origin Sound –\nVintage Crates 2..", 104, "#94b875", "#fff", "", "", [...at("fxt", 8, [8, 112, 164, 184]), ["mar", 104, 1], ["mar", 105, 1], ["mar", 106, 2], ["mar", 108, 1], ["mar", 109, 1], ["mar", 110, 2]]],
    ["bass..w cut", 32, "#452f70", "#ccbce6", "auto", "br", at("bass", .9, [23, 119])],
    ["Blanc – The Soun..", 90, "#afb973", "#fff", "tri", "parent tr bl", [["lil", 15.6, .4], ...at("blan", 1, [17, 19, 21, 23, 25, 27, 29, 33, 37, 49, 51, 53, 55, 57, 59, 61, 65, 67, 69, 73, 77, 113, 115, 117, 121, 123, 125, 129, 133, 145, 147, 149, 151, 169, 173]), ...at("blan", .7, [31, 35.2, 43.3, 63, 71, 75.3, 119, 127, 131.2, 139.2, 171.2])]],
    ["hi eq synth", 72, "#605cc8", "#fff", "", "", [["hiT", 47, 8.5], ["hiU", 112, 8.4], ["hiU", 144, 8.4]]]
];

function kickLines(len) {
    let w = len * 11.35, d = "";
    for (let g = 0; g * 17 + 11 < w; g++) {
        let n = Math.floor(g / 5) % 2 ? 3 : 2;
        for (let i = 0; i < n; i++) d += `M${g * 17 + 11 + i * 3}.5 0V41`;
    }
    return `<svg><path d="${d}" stroke="#957fff" stroke-width="1"/></svg>`;
}

function clipHtml(c, h) {
    let k = K[c[0]], len = c[2];
    let pos = `left:${(c[1] / BARS * 100).toFixed(3)}%;width:${(len / BARS * 100).toFixed(3)}%`;
    if (k.cls) return `<div class="clip ${k.cls}" style="${pos};--len:${len}">${c[0] == "kick" ? kickLines(len) : ""}</div>`;

    let bodied = h > 60;
    let cls = "clip" + (bodied ? " bodied" : "") + (h > 80 ? " high" : "");
    let n = Math.round(len * 11.35);
    let html = `<div class="${cls}" style="${pos}">`;
    if (k.x && c[1] > 0 && c[1] != 137) html += `<svg class="xfade" viewBox="0 0 14 30"><path d="M0 0C8 6 6 24 8 30M14 0C6 6 8 24 4 30" fill="none" stroke="#f0a0f5" stroke-width="1.500"/></svg>`;
    html += `<div class="title" style="background-color:${k.c};color:${k.f}">`;
    if (!bodied && k.w) html += wave(k.w, "#fff", n, .4);
    if (!k.thin && (len >= 1.5 || k.ghost || k.ghost1)) html += icon(k.i || "clip", k.f, k.ghost || len < 1.5 ? "ghost" : "");
    if (k.l) html += `<span class="lbl${k.dim ? " dim" : ""}">${k.l}</span>`;
    if (c[3] == "fade") html += `<svg class="fade" viewBox="0 0 90 30" preserveAspectRatio="none"><path d="M0 28C50 30 55 3 89 1" fill="none" stroke="#dccfff" stroke-width="2.500"/></svg>`;
    html += `</div>`;
    if (bodied) {
        html += `<div class="wavebox">`;
        if (k.w) html += wave(k.w, k.wc || k.f, Math.max(n, 8), k.w == "whistle" || k.w == "sob" ? .06 : .25);
        if (k.mark) html += `<svg><path d="M0 0H5L0 7Z" fill="#e0b060"/></svg>`;
        if (k.curve) html += `<svg viewBox="0 0 100 100" preserveAspectRatio="none"><path d="${k.curve}" fill="rgba(190,150,170,.25)" stroke="#c49ad8" stroke-width="2"/></svg>`;
        if (c[3] == "bfade") html += `<svg viewBox="0 0 90 40" preserveAspectRatio="none"><path d="M0 39C40 39 45 1 90 1" fill="none" stroke="#b8f6ff" stroke-width="2.500"/></svg>`;
        html += `</div>`;
    }
    return html + `</div>`;
}

let rowsHtml = "";
TRACKS.forEach(t => {
    let tall = t[1] > 60 || t[0] == "clap";
    let side = "";
    if (t[4] == "tri") side = `<svg class="tri" viewBox="0 0 18 10"><path d="M0 10L9 0L18 10Z" fill="${t[5].includes("dark") ? "#20241a" : "#fff"}"/></svg>`;
    else if (t[4]) side = icon(t[4], t[3]);
    rowsHtml += `<div class="row" style="height:${t[1]}px;--row:${t[2]}">
        <div class="head ${t[5].includes("parent") ? "parent" : ""}"><div class="track ${tall ? "tall" : ""} ${t[5]}" style="background-color:${t[2]};color:${t[3]}"><span class="name">${t[0]}</span>${t[1] > 60 ? `<span class="dots"></span>` : ""}<div class="side">${side}<button class="led" aria-label="Mute"></button></div></div></div>
        <div class="strip"></div>
        <div class="lane">${t[6].map(c => clipHtml(c, t[1])).join("")}</div>
    </div>`;
});
document.getElementById("rows").innerHTML = rowsHtml;

/* ---- ruler ---- */
let ruler = document.getElementById("ruler");
for (let b = 0; b < BARS; b += 8) {
    let n = b == 200 ? "20" : b + 1;
    ruler.insertAdjacentHTML("beforeend", `<span style="left:${(b / BARS * 100).toFixed(3)}%">${n}</span>`);
}

/* ---- overview: every lane as one thin line ---- */
let map = "";
TRACKS.forEach((t, i) => {
    t[6].forEach(c => {
        map += `<rect x="${c[1]}" y="${(1 + i * .95).toFixed(1)}" width="${Math.max(c[2] - .1, .3)}" height="1.200" fill="${K[c[0]].wc || K[c[0]].c}"/>`;
    });
});
[[8, 6], [16, 6], [24, 6], [32, 6], [40, 6], [66, 6], [98, 5], [120, 6], [128, 6], [160, 6]].forEach(s => {
    map += `<rect x="${s[0]}" y="29" width="${s[1]}" height="1.200" fill="#c4cc80"/><rect x="${s[0] + 5}" y="30.500" width="1.500" height="1.200" fill="#d04a90"/>`;
});
map += `<rect x="110" y="32" width="20" height="1.500" fill="#8a6af0"/><rect x="178" y="32" width="22" height="1.500" fill="#8a6af0"/>`;
document.getElementById("minimap").innerHTML = `<svg viewBox="0 0 202 34" preserveAspectRatio="none">${map}</svg>`;
```
